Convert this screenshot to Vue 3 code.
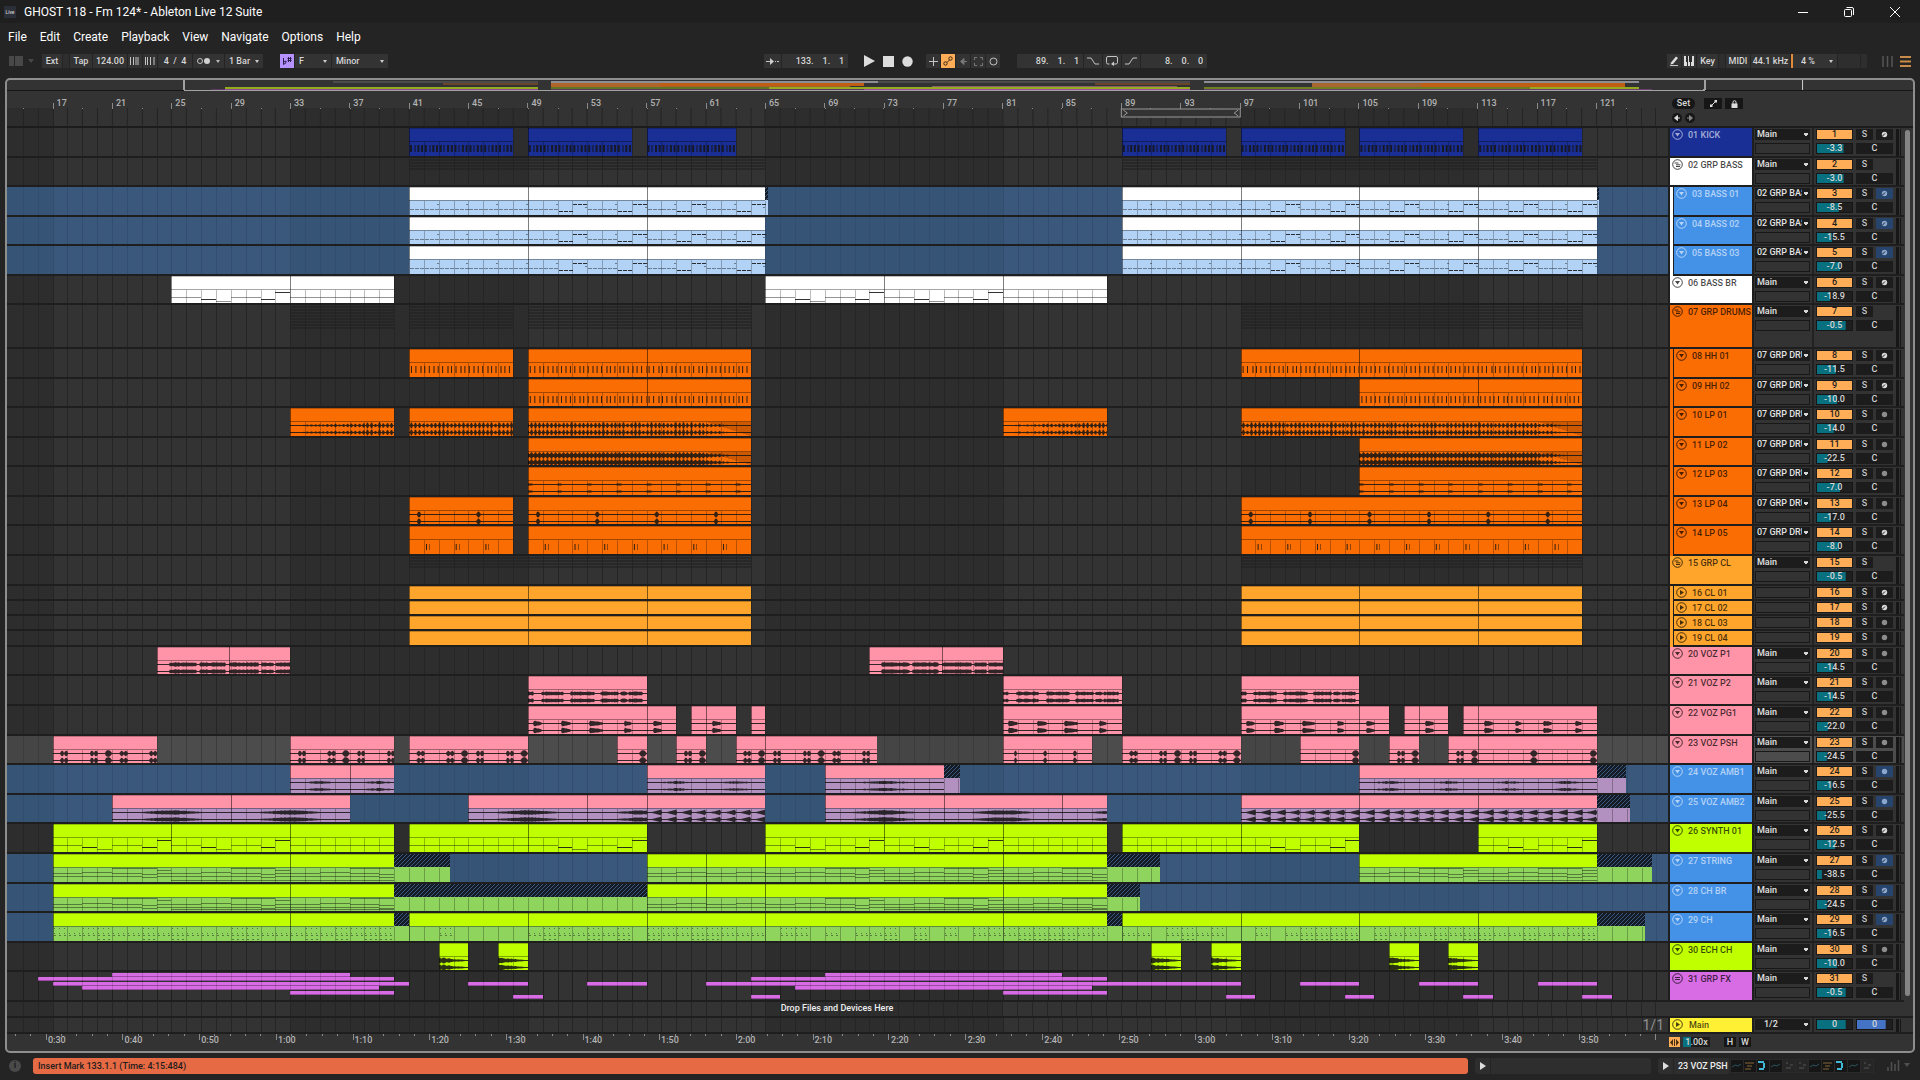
<script setup>
const LANE_W = 1661
const BAR = 14.85
const ORIGIN = 45.6
const X = (bar) => ORIGIN + (bar - 17) * BAR
const R = (bar) => Math.round(X(bar))
const pct = (px) => (px / LANE_W) * 100 + '%'

/* ---------- track data ---------- */
const BLUE = '#4491e8'
const C = { kick: '#1a2f96', white: '#ffffff', orange: '#f96d03', amber: '#ffa52b', pink: '#ff94a8', lime: '#bfff00', fx: '#d86ce4' }
const mixed = { [C.white]: '#b3d3f6', [C.pink]: '#b291c0', [C.lime]: '#8fd45c' }

const H30 = 30
const H29 = 29
const t = (n, name, color, h, vol, fill, extra = {}) => ({ n, name, color, h, vol, fill, route: 'Main', rec: 'dot', clips: [], ...extra })

const drums = { route: '07 GRP DRU', group: C.orange }
const bass = { route: '02 GRP BASS', group: C.white, sel: true, rec: 'midi', kind: 'bass' }
const cl = { route: '', group: C.amber, small: true, kind: 'none', clips: [[41, 49], [49, 57], [57, 64], [97, 105], [105, 113], [113, 120]] }

const tracks = [
  t(1, '01 KICK', C.kick, H30, '-3.3', 76, { rec: 'midi', kind: 'kick', light: true, clips: [[41, 48], [49, 56], [57, 63], [89, 96], [97, 104], [105, 112], [113, 120]] }),
  t(2, '02 GRP BASS', C.white, H29, '-3.0', 76, { rec: '', grp: true, ghosts: [[41, 65], [89, 121]], gh: 4 }),
  t(3, '03 BASS 01', C.white, H30, '-8.5', 62, { ...bass, clips: [[41, 49], [49, 57], [57, 65, 65.15], [89, 97], [97, 105], [105, 113], [113, 121, 121.15]] }),
  t(4, '04 BASS 02', C.white, H29, '-15.5', 44, { ...bass, clips: [[41, 49], [49, 57], [57, 65], [89, 97], [97, 105], [105, 113], [113, 121]] }),
  t(5, '05 BASS 03', C.white, H30, '-7.0', 66, { ...bass, clips: [[41, 49], [49, 57], [57, 65], [89, 97], [97, 105], [105, 113], [113, 121]] }),
  t(6, '06 BASS BR', C.white, H29, '-18.9', 38, { rec: 'midi', kind: 'synth', clips: [[25, 33], [33, 40], [65, 73], [73, 81], [81, 88]] }),
  t(7, '07 GRP DRUMS', C.orange, 44, '-0.5', 82, { rec: '', grp: true, ghosts: [[33, 40], [41, 48], [49, 64], [97, 120]], gh: 8 }),
  t(8, '08 HH 01', C.orange, H30, '-11.5', 54, { ...drums, rec: 'midi', kind: 'hh', clips: [[41, 48], [49, 57], [57, 64], [97, 105], [105, 120]] }),
  t(9, '09 HH 02', C.orange, H29, '-10.0', 58, { ...drums, rec: 'midi', kind: 'hh', clips: [[49, 57], [57, 64], [105, 113], [113, 120]] }),
  t(10, '10 LP 01', C.orange, H30, '-14.0', 48, { ...drums, kind: 'loop', clips: [[33, 40, 0, 'in'], [41, 48], [49, 64, 0, 'out'], [81, 88, 0, 'in'], [97, 120, 0, 'out']] }),
  t(11, '11 LP 02', C.orange, H29, '-22.5', 30, { ...drums, kind: 'dense', clips: [[49, 64, 0, 'out'], [105, 120, 0, 'out']] }),
  t(12, '12 LP 03', C.orange, H30, '-7.0', 66, { ...drums, kind: 'bumps', clips: [[49, 64], [105, 120]] }),
  t(13, '13 LP 04', C.orange, H29, '-17.0', 41, { ...drums, kind: 'claps', clips: [[41, 48], [49, 64], [97, 120]] }),
  t(14, '14 LP 05', C.orange, H30, '-8.0', 64, { ...drums, rec: 'midi', kind: 'ticks', clips: [[41, 48], [49, 64], [97, 120]] }),
  t(15, '15 GRP CL', C.amber, H30, '-0.5', 82, { rec: '', grp: true, ghosts: [[41, 64], [97, 120]], gh: 4 }),
  t(16, '16 CL 01', C.amber, 15, '', 0, { ...cl, rec: 'midi' }),
  t(17, '17 CL 02', C.amber, 15, '', 0, { ...cl, rec: 'midi' }),
  t(18, '18 CL 03', C.amber, 15, '', 0, cl),
  t(19, '19 CL 04', C.amber, 16, '', 0, cl),
  t(20, '20 VOZ P1', C.pink, H29, '-14.5', 47, { kind: 'voz1', clips: [[24, 28.9], [28.9, 33], [72, 76.9], [76.9, 81]] }),
  t(21, '21 VOZ P2', C.pink, H30, '-14.5', 47, { kind: 'voz2', clips: [[49, 57], [81, 89], [97, 105]] }),
  t(22, '22 VOZ PG1', C.pink, H30, '-22.0', 31, { kind: 'voz3', clips: [[49, 57], [57, 59], [60, 61], [61, 63], [64, 65], [81, 89], [97, 105], [105, 107], [108, 109], [109, 111], [112, 113], [113, 121]] }),
  t(23, '23 VOZ PSH', C.pink, H29, '-24.5', 28, { current: true, kind: 'push', clips: [[17, 24], [33, 40], [41, 49], [55, 57], [59, 61], [63, 65], [65, 72.5], [81, 87], [89, 97], [101, 105], [107, 109], [111, 113], [113, 121]] }),
  t(24, '24 VOZ AMB1', C.pink, H30, '-16.5', 42, { sel: true, kind: 'amb1', clips: [[33, 37], [37, 40], [57, 65], [69, 77, 78.1], [105, 121, 122.95]] }),
  t(25, '25 VOZ AMB2', C.pink, H29, '-25.5', 27, { sel: true, kind: 'amb2', clips: [[21, 29], [29, 37], [45, 53], [53, 57], [57, 65], [69, 77], [77, 85], [85, 88], [97, 105], [105, 113], [113, 121, 123.2]] }),
  t(26, '26 SYNTH 01', C.lime, H30, '-12.5', 52, { rec: 'midi', kind: 'synth', clips: [[17, 25], [25, 33], [33, 40], [41, 49], [49, 57], [65, 73], [73, 81], [81, 88], [89, 97], [97, 105], [113, 121]] }),
  t(27, '27 STRING', C.lime, H30, '-38.5', 14, { sel: true, rec: 'midi', kind: 'string', clips: [[17, 33], [33, 40, 43.75], [57, 61], [61, 65], [65, 81], [81, 88, 91.55], [105, 121, 124.7]] }),
  t(28, '28 CH BR', C.lime, H29, '-24.5', 28, { sel: true, rec: 'midi', kind: 'chord', clips: [[17, 33], [33, 40, 57], [57, 61], [61, 65], [65, 81], [81, 88, 90.2]] }),
  t(29, '29 CH', C.lime, H30, '-16.5', 42, { sel: true, rec: 'midi', kind: 'dots', clips: [[17, 33], [33, 40, 41], [41, 49], [49, 57], [57, 65], [65, 81], [81, 88, 89], [89, 97], [97, 105], [105, 113], [113, 121, 124.2]] }),
  t(30, '30 ECH CH', C.lime, H29, '-10.0', 58, { kind: 'echo', clips: [[43, 45], [47, 49], [91, 93], [95, 97], [107, 109], [111, 113]] }),
  t(31, '31 GRP FX', C.fx, H30, '-0.5', 82, { rec: '', grp: true, fx: true }),
]

const fxBars = [
  [[21, 37], [69, 85]],
  [[16, 40], [64, 88]],
  [[17, 41], [45, 49], [53, 57], [61, 97], [101, 105], [109, 113], [117, 121]],
  [[19, 39], [67, 87]],
  [[33, 40], [81, 88]],
  [[48, 50], [64, 66], [96, 98], [104, 106], [112, 114], [120, 122]],
].flatMap((row, i) => row.map(([a, b]) => ({ x: R(a), w: R(b) - R(a), y: 1 + Math.round(i * 4.4) })))

/* ---------- clip content ---------- */
const rnd = (i) => { const s = Math.sin(i * 12.9898) * 43758.5453; return s - Math.floor(s) }
const rect = (x, y, w, h) => `M${x.toFixed(1)} ${y}h${w}v${h}h${-w}z`

function wave(a, b, amp) {
  let d = ''
  const x0 = R(a), x1 = R(b)
  for (const c of [17.5, 24.5]) {
    const up = [], dn = []
    for (let x = x0; x <= x1; x++) {
      const p = 17 + (x - ORIGIN) / BAR
      const v = Math.max(0.4, Math.min(3.3, amp(p, x)))
      up.push(`${x} ${(c - v).toFixed(1)}`)
      dn.unshift(`${x} ${(c + v).toFixed(1)}`)
    }
    d += 'M' + up.join('L') + 'L' + dn.join('L') + 'z'
  }
  return d
}
const inside = (p, list) => list.some(([s, e]) => p >= s && p <= e)
const oval = (p, c, r) => { const q = 1 - ((p - c) / r) ** 2; return q > 0 ? Math.sqrt(q) : 0 }
const gauss = (q, s) => Math.exp(-(q * q) / (2 * s * s))
const saw = (p) => 3 * (p - Math.floor(p)) ** 1.6

function content(kind, a, b, fade) {
  let dark = '', dim = ''
  const A = X(a), B = X(b)
  const n = (x) => rnd(x * 1.7)
  if (kind === 'kick') {
    for (let x = A + 1, i = 0; x < B - 2; x += 3.71, i++) {
      if (i % 4 === 1) dim += rect(x, 17, 2, 7)
      else dark += rect(x, 17, 2, 7)
    }
  } else if (kind === 'hh') {
    for (let x = A + 2, i = 0; x < B - 1; x += 4.45, i++) {
      if (i % 3 === 2) dim += rect(x, 17, 2, 7)
      else dark += rect(x, 17, 1, 7)
    }
  } else if (kind === 'ticks') {
    for (let x = A + 17; x < B - 4; x += BAR * 2) {
      dark += rect(x, 18, 1, 6)
      dim += rect(x + 3, 18, 1, 6)
    }
  } else if (kind === 'bass') {
    for (let k = a; k < b; k++) {
      const q = (k - a) % 4
      const steps = ![41, 89].includes(a)
      const y = !steps || q < 2 ? 22 : q === 2 ? 24 : 17
      for (let s = 0; s < 3; s++) {
        const x = R(k) + s * 5 + 1
        if (y === 22) dim += rect(x, y, 4, 1)
        else dark += rect(x, y, 4, 1)
      }
      if (q % 2 === 1) dim += rect(X(k + 1) - 2, steps && q === 3 ? 20 : 17, 2, 1)
    }
  } else if (kind === 'synth') {
    for (let k = a; k < b; k++) {
      const plain = (k >= 33 && k < 49 && a >= 33) || (k >= 81 && k < 97)
      const q = plain ? 0 : (k - a) % 8
      const x = R(k), w = R(k + 1) - R(k)
      if (q === 2 || q === 6) dark += rect(x, 23, w, 1)
      else if (q === 3) dim += rect(x, 25, w, 1)
      else if (q === 7) dark += rect(x, 16, w, 1)
      else dim += rect(x, 21, w, 1)
    }
  } else if (kind === 'string' || kind === 'chord') {
    for (let k = a; k < b; k++) {
      const q = (k - a) % 8
      const x = R(k), w = R(k + 1) - R(k)
      const s = q === 2 || q === 3 ? -1 : q === 6 ? 1 : 0
      const base = kind === 'string' ? 19 : 20
      dim += rect(x, base + s, w, 1) + rect(x, base + 3 + (q === 6 ? 1 : 0), w, 1)
      if (q > 3) dim += rect(x, q === 7 ? 16 : 14, w, 1)
      if (k - a >= 8 || a === 33 || a === 81) dim += rect(x, kind === 'string' ? 26 : 25, w, 1)
    }
  } else if (kind === 'dots') {
    for (let k = a; k < b; k++) {
      const r = rnd(k * 3.1)
      if (r < 0.2 || (a === 41 && k !== 43)) continue
      for (let s = 0; s < 3; s++) {
        const x = X(k) + 1 + s * 5
        dim += rect(x, 20, 1, 1) + rect(x, 22, 2, 1)
        if (r > 0.45) dim += rect(x, 15, 1, 1)
        if (r > 0.65) dim += rect(x, 26, 2, 1)
      }
    }
  } else if (kind === 'loop' || kind === 'dense') {
    const base = kind === 'loop' ? 0.6 : 1.5
    dark = wave(a, b, (p, x) => {
      let f = 1
      if (fade === 'out') f = Math.max(0, Math.min(1, (b - 0.8 - p) / 2.6))
      if (fade === 'in') f = 0.1 + 0.9 * Math.min(1, (p - a) / 6)
      return f * (base + (x % 4 < 2 ? 2 : 0) * (0.5 + n(x)))
    })
  } else if (kind === 'bumps') dark = wave(a, b, (p) => ((p - a) % 2 < 0.3 ? 0.9 : 0.4))
  else if (kind === 'claps') dark = wave(a, b, (p) => 3 * oval((p - a) % 4, 0.68, 0.12))
  else if (kind === 'voz1') {
    const o = a < 40 ? 24 : 72
    dark = wave(a, b, (p, x) => inside(p - o, [[0.85, 2.7], [2.9, 4.65], [4.9, 6.85], [7.05, 7.9], [8, 9]]) ? 1.5 + n(x) * 0.8 : 0)
  } else if (kind === 'voz2') dark = wave(a, b, (p, x) => inside(p - a, [[0, 0.4], [0.9, 2.4], [2.9, 4.5], [4.9, 6.1], [6.25, 6.7], [6.8, 7.75]]) ? 1.2 + n(x) * 0.9 : 0)
  else if (kind === 'voz3') {
    const l = a === 113 ? [[0.45, 1], [2.5, 2.9], [4.4, 4.95], [6.55, 6.95]] : b - a > 4 ? [[0.4, 0.95], [2.3, 2.9], [4.15, 5], [6.5, 6.95]] : [57, 61, 105, 109].includes(a) ? [[0.45, 1]] : []
    dark = wave(a, b, (p, x) => {
      const s = l.find(([u, v]) => p - a >= u && p - a <= v)
      return s ? 2.6 - 1.6 * ((p - a - s[0]) / (s[1] - s[0])) + n(x) * 0.5 : 0
    })
  } else if (kind === 'push') {
    const only = [55, 101, 113].includes(a)
    dark = wave(a, b, (p) => {
      const m = (p + 3) % 4
      if (a === 81) return 3 * oval(p % 2, 1.84, 0.1)
      let v = 3.3 * oval(m, 3.75, 0.22)
      if (!only) for (const c of [0.65, 0.92, 2.65, 2.92]) v = Math.max(v, 2.8 * oval(m, c, 0.12))
      return v
    })
  } else if (kind === 'amb1') dark = wave(a, b, (p, x) => {
    const q = a === 69 ? (p - 73) / 2 : ((p - a) % 4) - 2
    return 1.5 * gauss(q, 0.65) * (0.5 + n(x) * 0.6)
  })
  else if (kind === 'amb2') dark = wave(a, b, (p, x) => {
    if (a === 57 || a >= 97) return saw(p)
    return 2.2 * gauss(p - a - 4, 1.3) * (0.75 + n(x) * 0.35)
  })
  else if (kind === 'echo') dark = wave(a, b, (p, x) => 2.8 * (1 - (p - a) / (b - a)) * (0.6 + n(x) * 0.5) + 0.3)
  return { dark, dim }
}

function barLines(a, b, y0, y1) {
  let d = ''
  for (let k = Math.ceil(a + 0.01); k < b; k++) d += `M${R(k) + 0.5} ${y0}V${y1}`
  return d
}
for (const tr of tracks) {
  tr.inner = tr.h - 2
  tr.drawn = tr.clips.map(([a, b, tail, fade]) => ({
    x: R(a), w: R(b) - R(a), end: R(b),
    tailW: tail ? Math.round(X(tail)) - R(b) : 0,
    grid: tr.small ? '' : barLines(a, tail || b, 14, tr.inner),
    fade: fade === 'out' ? `M${R(b - 3)} 14H${R(b)}V${tr.inner}Z` : '',
    ...content(tr.kind, a, b, fade),
  }))
  tr.body = tr.small ? tr.color : tr.sel ? mixed[tr.color] : tr.color
  tr.head = tr.sel ? BLUE : tr.color
}
const gridPath = barLines(14, 126, 0, 60)
const shades = [[13, 17], [33, 49], [65, 81], [97, 113]].map(([a, b]) => ({ x: R(a), w: R(b) - R(a) }))

/* ---------- rulers ---------- */
const beats = Array.from({ length: 27 }, (_, i) => 17 + i * 4)
const beatTicks = Array.from({ length: 55 }, (_, i) => 15 + i * 2)
const times = Array.from({ length: 21 }, (_, i) => {
  const s = 30 + i * 10
  return `${Math.floor(s / 60)}:${String(s % 60).padStart(2, '0')}`
})
const timeTicks = Array.from({ length: 108 }, (_, i) => Math.round(38.7 - 30.68 + i * 15.34))

/* ---------- transport readouts: figures sit in fixed columns ---------- */
const columns = (...parts) => parts.join('.\u00a0\u00a0\u00a0\u00a0')

/* ---------- overview ---------- */
const overview = [
  [225, 538, 8, 2, '#93ab1c'], [225, 538, 10, 2, '#8d4596'], [211, 225, 10, 2, '#5b3a60'],
  [333, 538, 2, 2, '#4b4b4b'], [443, 538, 4, 2, '#6b4429'],
  [551, 878, 2, 2, '#8d8f96'], [551, 660, 4, 4, '#b0662a'], [660, 864, 4, 3, '#c05e14'], [660, 850, 7, 2, '#a8602a'],
  [551, 769, 8, 2, '#5f7522'], [769, 1191, 8, 2, '#93ab1c'], [551, 864, 10, 2, '#5b3a60'], [864, 1191, 10, 2, '#a04aa8'],
  [878, 1191, 2, 2, '#4b4b4b'], [1096, 1191, 4, 2, '#6b4429'], [932, 1178, 7, 1, '#8c6069'],
  [1205, 1640, 2, 2, '#8d8f96'], [1313, 1422, 4, 4, '#a86630'], [1422, 1626, 4, 4, '#c05e14'], [1313, 1640, 8, 1, '#a05c5c'],
  [1205, 1531, 8, 2, '#6d7f20'], [1531, 1640, 8, 2, '#93ab1c'], [1205, 1653, 10, 2, '#6b3f70'],
].map(([a, b, y, h, c]) => ({ x: a - 7, w: b - a, y: y - 1, h, c }))

const menus = ['File', 'Edit', 'Create', 'Playback', 'View', 'Navigate', 'Options', 'Help']
const devices = [1, 2, 0, 1, 3, 3, 1, 2, 0, 1, 3]
</script>

<template>
  <div class="app">
    <header class="titlebar">
      <span class="logo">Live</span>
      <h1>GHOST 118 - Fm 124* - Ableton Live 12 Suite</h1>
      <div class="win">
        <button aria-label="Minimize"><svg width="12" height="12"><path d="M1 6.500H11" /></svg></button>
        <button aria-label="Restore"><svg width="12" height="12"><rect x="1.500" y="3.500" width="7" height="7" rx="1" /><path d="M3.500 1.500H9a1.500 1.500 0 0 1 1.500 1.500V9" /></svg></button>
        <button aria-label="Close"><svg width="12" height="12"><path d="M1 1L11 11M11 1L1 11" /></svg></button>
      </div>
    </header>

    <nav class="menu">
      <a v-for="m in menus" :key="m" href="#">{{ m }}</a>
    </nav>

    <div class="toolbar">
      <div class="tools">
        <button class="plain w14" aria-label="Browser"><svg width="14" height="10"><path d="M0 0h5v10H0zM6 0h8v10H6z" fill="#484848" /></svg></button>
        <button class="plain w17 arrow" aria-label="View options"><svg width="6" height="4"><path d="M0 0h6L3 4z" fill="#484848" /></svg></button>
        <button class="w20">Ext</button>
        <span class="cell w6"></span>
        <button class="w22">Tap</button>
        <input class="w34" aria-label="Tempo" value="124.00" />
        <button class="w14" aria-label="Nudge down"><svg width="10" height="8"><path d="M.5 0V8M3.500 0V8M6 0V8M8 0V8" class="ln" /></svg></button>
        <button class="w14" aria-label="Nudge up"><svg width="10" height="8"><path d="M.5 0V8M2.500 0V8M5.500 0V8M9 0V8" class="ln" /></svg></button>
        <input class="w34" aria-label="Time signature" :value="'4\u00a0\u00a0/\u00a0\u00a04'" />
        <button class="w31" aria-label="Metronome"><svg width="25" height="8"><circle cx="4" cy="4" r="2.500" class="ln" /><circle cx="11" cy="4" r="3" fill="#d0d0d0" /><path d="M20 3h4l-2 3z" fill="#bbb" /></svg></button>
        <span class="pick w38"><select aria-label="Quantization"><option>1 Bar</option></select></span>
        <button class="w14 scale" aria-label="Scale mode"><svg width="10" height="10"><path d="M1.500 2V8.500L4 6.800V5L1.500 6M6.500 1V6M8.500 1V6M5.500 2.500H9.500M5.500 4.500H9.500" stroke="#2a1d4a" fill="none" /></svg></button>
        <span class="pick w36"><select aria-label="Root note"><option>F</option></select></span>
        <span class="pick w56"><select aria-label="Scale name"><option>Minor</option></select></span>
      </div>
      <div class="space-a"></div>
      <div class="tools">
        <button class="w17" aria-label="Follow"><svg width="13" height="8"><path d="M0 4.500h4M9 4.500h1M11 4.500h2" class="ln" /><path d="M4 1l4 3.500L4 8z" fill="#ccc" /></svg></button>
        <input class="w66 right" aria-label="Arrangement position" :value="columns(133, 1, 1)" />
        <button class="plain w18 gapl" aria-label="Play"><svg width="11" height="12"><path d="M0 0L11 6L0 12z" fill="#dcdcdc" /></svg></button>
        <button class="plain w18" aria-label="Stop"><svg width="11" height="11"><path d="M0 0h11v11H0z" fill="#dcdcdc" /></svg></button>
        <button class="plain w18 gapr" aria-label="Record"><svg width="11" height="11"><circle cx="5.500" cy="5.500" r="5.200" fill="#dcdcdc" /></svg></button>
        <button class="w14" aria-label="Overdub"><svg width="9" height="9"><path d="M4.500 0V9M0 4.500H9" class="ln" /></svg></button>
        <button class="w14 on" aria-label="Automation arm"><svg width="10" height="10"><circle cx="2.500" cy="7.500" r="1.700" stroke="#3b2a14" fill="none" /><circle cx="7.500" cy="2.500" r="1.700" stroke="#3b2a14" fill="none" /><path d="M4 6.500L6.500 4" stroke="#3b2a14" /></svg></button>
        <button class="w14" aria-label="Re-enable automation"><svg width="9" height="9"><path d="M4 4.500h4M5 1.500L1.500 4.500L5 7.500z" stroke="#777" fill="#777" /></svg></button>
        <button class="w14" aria-label="Capture MIDI"><svg width="9" height="9"><path d="M.5 3V.5H3M6 .5H8.500V3M8.500 6V8.500H6M3 8.500H.5V6" stroke="#777" fill="none" /></svg></button>
        <button class="w14" aria-label="Session record"><svg width="9" height="9"><circle cx="4.500" cy="4.500" r="3.500" class="ln" /></svg></button>
        <input class="w66 right loopstart" aria-label="Loop start" :value="columns(89, 1, 1)" />
        <button class="w18" aria-label="Punch in"><svg width="12" height="8"><path d="M0 1h4l4 6h4" class="ln" /></svg></button>
        <button class="w18" aria-label="Loop"><svg width="12" height="10"><path d="M3.500 8H2Q.5 8 .5 6.500V2Q.5.500 2 .5H10Q11.500.500 11.500 2V6.500Q11.500 8 10 8H6" class="ln" /><path d="M5 8l3-2.500v4.500z" fill="#ccc" /></svg></button>
        <button class="w18" aria-label="Punch out"><svg width="12" height="8"><path d="M0 7h4l4-6h4" class="ln" /></svg></button>
        <input class="w66 right" aria-label="Loop length" :value="columns(8, 0, 0)" />
      </div>
      <div class="space-b"></div>
      <div class="tools">
        <button class="w14" aria-label="Draw mode"><svg width="10" height="10"><path d="M2 6.500L7 .5L9 2L4 8L1.500 8.500z" fill="#ddd" /><path d="M1 9.500H9" class="ln" /></svg></button>
        <button class="w14" aria-label="Computer MIDI keyboard"><svg width="10" height="10"><path d="M0 0h10v10H0z" fill="#ddd" /><path d="M3.500 0V10M6.500 0V10M2.500 0V6M5.500 0V6M7.500 0V6" stroke="#2c2c2c" /></svg></button>
        <button class="w21">Key</button>
        <span class="cell w6"></span>
        <button class="w24">MIDI</button>
        <button class="w39">44.1 kHz</button>
        <span class="pick cpu w46"><select aria-label="CPU load"><option>4 %</option></select></span>
        <span class="cell w22"></span>
        <span class="cell w6"></span>
        <button class="plain w17 gapl" aria-label="Session view"><svg width="11" height="11"><path d="M1 0V11M5.500 0V11M10 0V11" stroke="#555" stroke-width="1.500" /></svg></button>
        <button class="plain w17" aria-label="Arrangement view"><svg width="11" height="11"><path d="M0 1H11M0 10H11" stroke="#ffad56" stroke-width="1.500" /><path d="M0 5.500H11" stroke="#c98a45" stroke-width="2" /></svg></button>
      </div>
    </div>

    <main class="pane">
      <svg class="overview" viewBox="0 0 1907 11" preserveAspectRatio="none" shape-rendering="crispEdges">
        <rect v-for="(o, i) in overview" :key="i" :x="o.x" :y="o.y" :width="o.w" :height="o.h" :fill="o.c" />
        <path d="M0 10.500H177M1699 10.500H1907" stroke="#151515" />
        <path d="M177 0V9L178 10.500H1697L1699 9V0" stroke="#a2a2a2" stroke-width="2" fill="none" />
        <path d="M1796.500 0V10" stroke="#d0d0d0" />
      </svg>

      <div class="rulerrow">
        <div class="ruler">
          <div class="beats">
            <i :style="{ width: pct(ORIGIN) }"></i>
            <span v-for="b in beats" :key="b" :style="{ width: pct(BAR * 4) }">{{ b }}</span>
          </div>
          <svg class="grid" viewBox="0 0 1661 20" preserveAspectRatio="none" shape-rendering="crispEdges">
            <rect v-for="s in shades" :key="s.x" :x="s.x" y="0" :width="s.w" height="20" fill="#2d2d2d" />
            <path :d="gridPath" stroke="#242424" />
            <rect v-for="b in beatTicks" :key="b" :x="R(b)" y="0" width="1" height="1" fill="#8a8a8a" />
            <rect :x="R(89)" y="1" :width="R(97) - R(89)" height="8" fill="#333" stroke="#9a9a9a" />
            <path :d="`M${R(89) + 2} 2L${R(89) + 6} 5L${R(89) + 2} 8M${R(97) - 2} 2L${R(97) - 6} 5L${R(97) - 2} 8`" stroke="#9a9a9a" fill="none" shape-rendering="auto" />
          </svg>
        </div>
        <div class="setbox">
          <div class="line">
            <button class="pill">Set</button>
            <button class="sq" aria-label="Automation mode"><svg width="7" height="7"><path d="M0 4.500h2.500V7H0zM4.500 0H7v2.500H4.500z" fill="#ddd" /><path d="M1.500 5.500L5.500 1.500" stroke="#ddd" /></svg></button>
            <button class="sq" aria-label="Lock envelopes"><svg width="7" height="8"><path d="M.5 3.500h6V8h-6z" fill="#ddd" /><path d="M2 4V2.200a1.500 1.500 0 0 1 3 0V4" stroke="#ddd" fill="none" /></svg></button>
          </div>
          <div class="line">
            <button class="round" aria-label="Previous locator"><svg width="6" height="6"><path d="M6 3H2M3.500.5L.5 3L3.500 5.500z" stroke="#ddd" fill="#ddd" /></svg></button>
            <button class="round" aria-label="Next locator"><svg width="6" height="6"><path d="M0 3H4M2.500.5L5.500 3L2.500 5.500z" stroke="#888" fill="#888" /></svg></button>
          </div>
        </div>
      </div>

      <svg width="0" height="0" class="defs">
        <defs>
          <pattern id="hatch" width="4" height="4" patternUnits="userSpaceOnUse">
            <rect width="4" height="4" fill="#151b24" />
            <path d="M-1 1L1-1M0 4L4 0M3 5L5 3" stroke="#3a5a82" stroke-width="1" />
          </pattern>
        </defs>
      </svg>

      <div class="body">
        <div class="tracks">
          <section v-for="tr in tracks" :key="tr.n" class="row" :class="{ sel: tr.sel, current: tr.current, small: tr.small }" :style="{ height: tr.h + 'px' }">
            <svg class="lane" :viewBox="`0 0 ${LANE_W} ${tr.inner}`" preserveAspectRatio="none">
              <g shape-rendering="crispEdges">
                <rect v-for="s in shades" :key="s.x" class="shade" :x="s.x" y="0" :width="s.w" height="60" />
                <path class="gridline" :d="gridPath" />
                <template v-if="tr.ghosts">
                  <g v-for="g in tr.ghosts" :key="g[0]">
                    <rect v-for="k in tr.gh" :key="k" :x="R(g[0])" :y="(k - 1) * 3 + 1" :width="R(g[1]) - R(g[0])" height="2" fill="#222" fill-opacity="0.6" />
                  </g>
                </template>
                <template v-if="tr.fx">
                  <g v-for="(f, i) in fxBars" :key="i">
                    <rect :x="f.x" :y="f.y" :width="f.w" height="4" fill="#d86ce4" />
                    <rect :x="f.x" :y="f.y + 3" :width="f.w" height="1" fill="#9a4aa3" />
                  </g>
                  <path :d="gridPath" stroke="#000" stroke-opacity="0.15" />
                </template>
              </g>
              <g v-for="c in tr.drawn" :key="c.x">
                <g shape-rendering="crispEdges">
                  <rect :x="c.x" y="0" :width="c.w" :height="tr.inner" :fill="tr.color" />
                  <rect v-if="!tr.small" :x="c.x" y="13" :width="c.w + c.tailW" :height="tr.inner - 13" :fill="tr.body" />
                  <rect v-if="c.tailW" :x="c.end" y="0" :width="c.tailW" height="13" fill="url(#hatch)" />
                  <path :d="c.grid" stroke="#000" stroke-opacity="0.26" />
                  <rect v-if="!tr.small" :x="c.x" y="13" :width="c.w" height="1" fill="#000" fill-opacity="0.35" />
                  <path v-if="c.fade" :d="c.fade" fill="#000" fill-opacity="0.18" />
                  <path :d="c.dim" fill="#111" fill-opacity="0.45" />
                </g>
                <path :d="c.dark" fill="#161616" fill-opacity="0.88" />
                <path :d="`M${c.x + 0.5} 0V${tr.inner}`" stroke="#000" stroke-opacity="0.5" shape-rendering="crispEdges" />
                <path :d="`M${c.x} .5H${c.x + c.w}`" stroke="#000" stroke-opacity="0.25" shape-rendering="crispEdges" />
              </g>
            </svg>

            <div class="head" :class="{ light: tr.light }">
              <span v-if="tr.group" class="stripe" :style="{ background: tr.group }"></span>
              <div class="name" :style="{ background: tr.head }">
                <svg width="11" height="11" class="fold">
                  <circle cx="5.500" cy="5.500" r="4.800" />
                  <path v-if="tr.small" class="f" d="M4 3L8 5.500L4 8z" />
                  <path v-else-if="tr.fx" d="M3 4.500H8M3 6.500H8" />
                  <path v-else-if="tr.grp" d="M2.500 4H6.500M4 5.800H8.500M4 7.500H8" />
                  <path v-else class="f" d="M3 4H8L5.500 7.500z" />
                </svg>
                <span>{{ tr.name }}</span>
              </div>
            </div>

            <div class="io">
              <span v-if="tr.route" class="pick"><select :aria-label="'Output of ' + tr.name"><option>{{ tr.route }}</option></select></span>
              <span class="slot"></span>
            </div>

            <div class="mix">
              <button class="num">{{ tr.n }}</button>
              <button class="dk">S</button>
              <button v-if="tr.rec" class="dk arm" :aria-label="'Arm ' + tr.name">
                <svg width="7" height="7"><circle cx="3.500" cy="3.500" r="2.700" :fill="tr.sel ? '#8aa6cc' : tr.rec === 'midi' ? '#d8d8d8' : '#8c8c8c'" /><path v-if="tr.rec === 'midi'" d="M1.500 5L4 2.500" stroke="#222" /></svg>
              </button>
              <span v-else></span>
              <template v-if="!tr.small">
                <input class="vol" :aria-label="'Volume of ' + tr.name" :value="tr.vol" :style="{ backgroundSize: tr.fill + '% 100%' }" />
                <input class="pan" :aria-label="'Pan of ' + tr.name" value="C" />
              </template>
            </div>
            <span class="meter"></span>
          </section>
        </div>
        <div class="scroll"><span></span></div>
      </div>

      <div class="row drop">
        <div class="lanebox">
          <svg class="lane" :viewBox="`0 0 ${LANE_W} 15`" preserveAspectRatio="none" shape-rendering="crispEdges">
            <rect v-for="s in shades" :key="s.x" class="shade" :x="s.x" y="0" :width="s.w" height="60" />
            <path class="gridline" :d="gridPath" />
          </svg>
          <p>Drop Files and Devices Here</p>
        </div>
      </div>

      <div class="row main">
        <div class="lanebox">
          <svg class="lane" :viewBox="`0 0 ${LANE_W} 14`" preserveAspectRatio="none" shape-rendering="crispEdges">
            <rect v-for="s in shades" :key="s.x" class="shade" :x="s.x" y="0" :width="s.w" height="60" />
            <path class="gridline" :d="gridPath" />
          </svg>
          <em>1/1</em>
        </div>
        <div class="head">
          <div class="name yellow">
            <svg width="11" height="11" class="fold"><circle cx="5.500" cy="5.500" r="4.800" /><path class="f" d="M4 3L8 5.500L4 8z" /></svg>
            <span>Main</span>
          </div>
        </div>
        <div class="io"><span class="pick"><select class="indent" aria-label="Main output"><option>1/2</option></select></span></div>
        <div class="mix">
          <input class="vol full" aria-label="Main volume" value="0" />
          <input class="pan cue" aria-label="Cue volume" value="0" />
        </div>
        <span class="meter"></span>
      </div>

      <div class="timerow">
        <div class="timeruler">
          <svg viewBox="0 0 1661 6" preserveAspectRatio="none" shape-rendering="crispEdges">
            <rect v-for="(x, i) in timeTicks" :key="i" :x="x" y="0" width="1" :height="i % 5 === 2 ? 6 : 2" fill="#8a8a8a" />
          </svg>
          <div class="times">
            <i :style="{ width: pct(39) }"></i>
            <span v-for="s in times" :key="s" :style="{ width: pct(76.7) }">{{ s }}</span>
          </div>
        </div>
        <div class="zoomtools">
          <button class="oj" aria-label="Optimize width"><svg width="9" height="7"><path d="M3 0L0 3.500L3 7zM6 0L9 3.500L6 7zM4 0h1v7H4z" fill="#4a3010" /></svg></button>
          <input class="zoomv" aria-label="Zoom factor" value="1.00x" />
          <button class="hw">H</button>
          <button class="hw last">W</button>
        </div>
      </div>
    </main>

    <footer class="status">
      <span class="info">i</span>
      <p>Insert Mark 133.1.1 (Time: 4:15:484)</p>
      <div class="clipbox"><button aria-label="Show clip view"><svg width="6" height="8"><path d="M0 0L6 4L0 8z" fill="#ddd" /></svg></button><span></span></div>
      <div class="devbox">
        <button aria-label="Show device view"><svg width="6" height="8"><path d="M0 0L6 4L0 8z" fill="#ddd" /></svg></button>
        <span class="dname">23 VOZ PSH</span>
        <svg class="chain" width="144" height="14">
          <g v-for="(d, i) in devices" :key="i" :transform="`translate(${i * 13},0)`">
            <rect x="1" y="1" width="12" height="12" :fill="d === 3 ? '#262626' : '#161616'" />
            <path v-if="d === 1" d="M2 8L5 6L8 7L11 5" stroke="#2a5560" fill="none" />
            <path v-if="d === 2" d="M2 4H11M4 7H9M2 10H8" stroke="#866636" fill="none" />
            <path v-if="d === 0" d="M2 3H8M8 4V9M3 10H8" stroke="#42b8d8" stroke-width="2" fill="none" />
            <path v-if="d === 3" d="M4 4H6M8 6H11M4 9H9" stroke="#555" fill="none" />
          </g>
        </svg>
      </div>
      <svg class="lv" width="24" height="12"><path d="M1 7V11M4.500 2V11M8 4V11M11.500 0V11" stroke="#505050" stroke-width="1.500" /><path d="M17 3h6l-3 4z" fill="#505050" /></svg>
    </footer>
  </div>
</template>

<style>
html,
body {
  background: #242424;
}
</style>

<style scoped>
.app {
  font: 500 9px/11px Roboto, "Liberation Sans", sans-serif;
  color: #d6d6d6;
  background: #242424;
}
.app *,
.app *::after {
  box-sizing: border-box;
}
button,
input,
select {
  font: inherit;
  color: inherit;
  margin: 0;
  padding: 0;
  border: 0;
  border-radius: 0;
  background: #333;
  text-align: center;
  min-width: 0;
}
button {
  display: flex;
  align-items: center;
  justify-content: center;
}
svg {
  display: block;
  flex: none;
}
.ln {
  stroke: #c4c4c4;
  fill: none;
}
.titlebar {
  display: flex;
  align-items: center;
  height: 23px;
  padding-left: 4px;
  background: #1f1f1f;
}
.logo {
  width: 12px;
  height: 12px;
  margin-right: 8px;
  background: #2b2f38;
  font-size: 5px;
  line-height: 12px;
  text-align: center;
  color: #ccc;
}
h1 {
  margin: 0;
  font: 400 12px/16px Roboto, sans-serif;
  color: #fff;
}
.win {
  display: flex;
  margin: 0 2px 0 auto;
}
.win button {
  width: 46px;
  height: 22px;
  background: none;
}
.win svg {
  fill: none;
  stroke: #fff;
}
.menu {
  display: flex;
  gap: 13px;
  height: 31px;
  padding: 6px 8px 0;
}
.menu a {
  font: 400 12px/16px Roboto, sans-serif;
  color: #fff;
  text-decoration: none;
}
.toolbar {
  display: flex;
  height: 14px;
  margin: 0 6px 10px 9px;
}
.tools {
  display: flex;
  gap: 1px;
}
.tools > * {
  height: 14px;
  flex: none;
}
.tools .plain {
  background: none;
}
.arrow {
  padding-right: 3px;
}
.space-a {
  flex: 9;
}
.space-b {
  flex: 11;
}
.cell {
  background: #2e2e2e;
}
.w6 { width: 6px; }
.w14 { width: 14px; }
.w17 { width: 17px; }
.w18 { width: 18px; }
.w20 { width: 20px; }
.w21 { width: 21px; }
.w22 { width: 22px; }
.w24 { width: 24px; }
.w31 { width: 31px; }
.w34 { width: 34px; }
.w36 { width: 36px; }
.w38 { width: 38px; }
.w39 { width: 39px; }
.w46 { width: 46px; }
.w56 { width: 56px; }
.w66 { width: 66px; }
.gapl { margin-left: 11px; }
.gapr { margin-right: 9px; }
.loopstart { margin-left: 16px; }
.right {
  text-align: right;
  padding-right: 4px;
}
.scale {
  background: #b692ff;
  margin-left: 16px;
}
.on {
  background: #ffad56;
}
.pick {
  position: relative;
  display: block;
}
.pick select {
  display: block;
  width: 100%;
  height: 100%;
  padding-left: 4px;
  text-align: left;
  appearance: none;
}
.pick::after {
  content: "";
  position: absolute;
  right: 4px;
  top: 6px;
  border: 2px solid transparent;
  border-top: 3px solid #ccc;
  border-bottom: 0;
}
.cpu select {
  padding-left: 8px;
  border-left: 2px solid #e08a3c;
}
.pane {
  margin: 0 5px;
  border: 2px solid #8e8e8e;
  border-radius: 5px;
  background: #333;
  overflow: hidden;
}
.overview {
  width: 100%;
  height: 11px;
}
.rulerrow {
  display: flex;
  height: 37px;
  border-bottom: 2px solid #1c1c1c;
}
.ruler,
.lane,
.lanebox,
.timeruler {
  flex: 1 1 0;
  min-width: 0;
  overflow: hidden;
}
.beats,
.times {
  display: flex;
  color: #b4b4b4;
}
.beats i,
.times i {
  flex: none;
}
.beats {
  height: 17px;
  padding-top: 8px;
}
.beats span {
  flex: none;
  height: 9px;
  padding-left: 4px;
  line-height: 9px;
  background: linear-gradient(#8a8a8a, #8a8a8a) no-repeat 0 100% / 1px 5px;
}
.grid {
  width: 100%;
  height: 20px;
}
.setbox {
  width: 246px;
  padding: 7px 0 0 5px;
}
.line {
  display: flex;
  gap: 3px;
  margin-bottom: 4px;
}
.pill {
  width: 23px;
  height: 11px;
  margin-right: 6px;
  border-radius: 6px;
  background: #161616;
}
.sq {
  width: 18px;
  height: 11px;
  background: #161616;
}
.round {
  width: 10px;
  height: 10px;
  border-radius: 5px;
  background: #161616;
}
.defs {
  position: absolute;
}
.body {
  display: flex;
}
.tracks {
  flex: 1;
  min-width: 0;
}
.scroll {
  width: 9px;
  padding: 2px 3px 6px 1px;
}
.scroll span {
  display: block;
  height: 100%;
  border-radius: 3px;
  background: #848484;
}
.row {
  display: flex;
  border-bottom: 2px solid #1e1e1e;
  background: #333;
}
.lane {
  height: 100%;
}
.shade {
  fill: #2d2d2d;
}
.gridline {
  stroke: #252525;
  fill: none;
}
.sel .lane {
  background: #3a587b;
}
.sel .shade {
  fill: #365476;
}
.sel .gridline {
  stroke: #324d6d;
}
.current,
.current .lane {
  background: #4c4c4c;
}
.current .shade {
  fill: #454545;
}
.current .gridline {
  stroke: #3c3c3c;
}
.head {
  display: flex;
  width: 86px;
  padding-left: 2px;
  border-right: 2px solid #1e1e1e;
  background: #1e1e1e;
  color: rgba(0, 0, 0, 0.72);
}
.head.light,
.sel .head {
  color: rgba(255, 255, 255, 0.6);
}
.stripe {
  width: 3px;
  margin: 0 1px -2px 0;
  flex: none;
}
.name {
  display: flex;
  flex: 1;
  gap: 5px;
  min-width: 0;
  padding: 1px 0 0 2px;
  line-height: 12px;
  white-space: nowrap;
}
.fold {
  fill: none;
  stroke: currentColor;
  stroke-width: 1;
}
.fold .f {
  fill: currentColor;
  stroke: none;
}
.io {
  width: 60px;
  padding: 1px 2px 0 1px;
  border-right: 2px solid #222;
}
.row .pick {
  height: 11px;
  margin-bottom: 3px;
}
.row .pick select {
  background: #1c1c1c;
  padding: 0 0 0 2px;
  color: #e2e2e2;
}
.row .pick select.indent {
  padding-left: 9px;
}
.row .pick::after {
  top: 0;
  right: 0;
  width: 8px;
  height: 11px;
  border: 0;
  background: #1c1c1c conic-gradient(from -32deg at 50% 100%, #d6d6d6 64deg, transparent 0) no-repeat 1px 4px / 6px 4px;
}
.slot {
  display: block;
  height: 11px;
  border: 1px solid #181818;
}
.mix {
  display: grid;
  grid-template-columns: 37px 17px 17px;
  grid-auto-rows: 11px;
  gap: 3px;
  align-content: start;
  padding: 1px 0 0 2px;
}
.num {
  background: #ffad56;
  box-shadow: inset 0 0 0 1px #1a1a1a;
  color: #1c1c1c;
}
.dk {
  background: #1c1c1c;
  color: #c4c4c4;
}
.sel .arm {
  background: #27446c;
}
.vol {
  width: 37px;
  border: 1px solid #161616;
  background: #1f1f1f linear-gradient(#08707f, #08707f) no-repeat;
}
.vol.full {
  background-size: 82% 100%;
}
.pan {
  grid-column: span 2;
  width: 37px;
  background: #1c1c1c;
}
.pan.cue {
  border: 1px solid #161616;
  background: #1f1f1f linear-gradient(#4472c4, #4472c4) no-repeat;
  background-size: 82% 100%;
}
.meter {
  width: 6px;
  margin: 1px 2px 0 3px;
  background: #161616;
  border-right: 3px double #333;
}
.drop,
.main {
  height: 16px;
}
.drop .lanebox,
.main .lanebox {
  display: grid;
}
.drop .lane,
.main .lane,
.lanebox p,
.lanebox em {
  grid-area: 1 / 1;
  width: 100%;
}
.drop {
  padding-right: 246px;
}
.lanebox p {
  margin: 0;
  text-align: center;
  color: #eee;
  line-height: 13px;
}
.main {
  padding-right: 9px;
}
.main .lanebox em {
  font: 400 14px/14px Roboto, sans-serif;
  color: #909090;
  text-align: right;
  padding-right: 4px;
}
.yellow {
  background: #fff033;
}
.main .name {
  gap: 6px;
}
.timerow {
  display: flex;
  height: 17px;
}
.timeruler svg {
  width: 100%;
  height: 6px;
}
.times {
  margin-top: -5px;
}
.times span {
  flex: none;
  padding-left: 2px;
}
.zoomtools {
  display: flex;
  gap: 3px;
  width: 246px;
  padding: 3px 0 0 2px;
}
.oj {
  width: 11px;
  height: 10px;
  background: #ffad56;
}
.zoomv {
  width: 27px;
  height: 10px;
  background: #1c1c1c linear-gradient(#08707f, #08707f) no-repeat;
  background-size: 30% 100%;
}
.hw {
  width: 12px;
  height: 10px;
  margin-left: 11px;
  background: #161616;
}
.hw.last {
  margin-left: 0;
}
.status {
  display: flex;
  align-items: center;
  gap: 7px;
  margin-top: 5px;
  padding: 0 9px 7px 9px;
}
.info {
  width: 12px;
  height: 12px;
  margin-right: 5px;
  border-radius: 6px;
  background: #4a4a4a;
  color: #1c1c1c;
  text-align: center;
  font-weight: 700;
}
.status p {
  flex: 1;
  margin: 0;
  padding-left: 5px;
  height: 16px;
  line-height: 16px;
  border-radius: 3px;
  background: #e66a44;
  color: #1d1d1d;
}
.clipbox,
.devbox {
  display: flex;
  height: 16px;
  gap: 1px;
}
.status button {
  width: 15px;
  height: 16px;
  border-radius: 3px 0 0 3px;
  background: #2e2e2e;
}
.clipbox span {
  width: 160px;
  border-radius: 0 3px 3px 0;
  background: #2e2e2e;
}
.dname {
  width: 55px;
  padding-left: 4px;
  line-height: 16px;
  background: #2e2e2e;
  color: #eee;
  white-space: nowrap;
}
.chain {
  background: #2a2a2a;
  margin-top: 1px;
}
.lv {
  margin-left: 6px;
}
</style>
